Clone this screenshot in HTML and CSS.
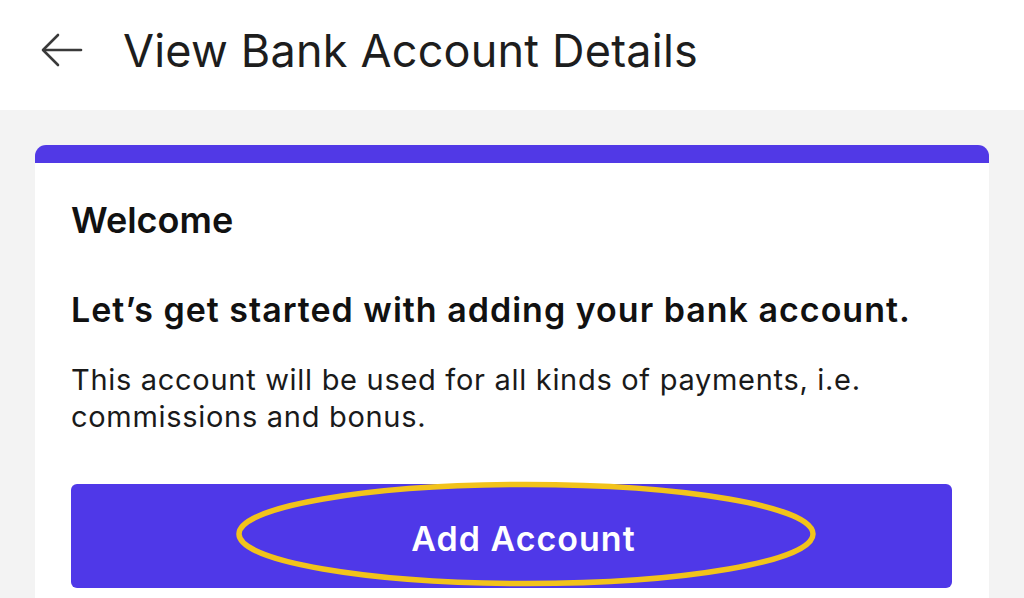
FILE: index.html
```html
<!DOCTYPE html>
<html lang="en">
<head>
<meta charset="utf-8">
<title>View Bank Account Details</title>
<link rel="stylesheet" href="styles.css">
</head>
<body>
<header class="topbar">
  <svg class="back" width="42" height="34" viewBox="0 0 42 34" fill="none" stroke="#3a3a3a" stroke-width="2.6" stroke-linecap="round" stroke-linejoin="round">
    <path d="M40 17 H3"/>
    <path d="M17 2 L2 17 L17 32"/>
  </svg>
  <h1 class="title">View Bank Account Details</h1>
</header>
<main class="content">
  <section class="card">
    <h2 class="welcome">Welcome</h2>
    <h3 class="lead">Let’s get started with adding your bank account.</h3>
    <p class="desc">This account will be used for all kinds of payments, i.e. commissions and bonus.</p>
    <div class="btn-wrap">
      <button class="btn">Add Account</button>
      <svg class="ring" width="584" height="106" viewBox="0 0 584 106" fill="none">
        <ellipse cx="292" cy="53" rx="287" ry="49.5" stroke="#f2c31b" stroke-width="5.5"/>
      </svg>
    </div>
  </section>
</main>
</body>
</html>
```

FILE: styles.css
```css
* { box-sizing: border-box; }
html, body { margin: 0; padding: 0; }
body {
  width: 1024px;
  height: 598px;
  overflow: hidden;
  background: #f3f3f3;
  font-family: Inter, "Noto Sans", sans-serif;
  color: #111;
}
.topbar {
  height: 110px;
  background: #fff;
  display: flex;
  align-items: center;
  padding: 0 0 10px 41px;
}
.back { display: block; flex: none; }
.title {
  margin: 0 0 0 40px;
  font-size: 45px;
  font-weight: 400;
  letter-spacing: 0.2px;
  color: #1d1d1d;
  line-height: 1;
}
.content {
  padding: 35px 35px 0 35px;
}
.card {
  background: #fff;
  border-top: 18px solid #5139e6;
  border-radius: 11px 11px 0 0;
  padding: 35px 37px 30px 36px;
  height: 460px;
}
.welcome {
  margin: 0;
  font-size: 36px;
  font-weight: 600;
  line-height: 44px;
  color: #111;
}
.lead {
  margin: 46px 0 0;
  font-size: 34px;
  font-weight: 600;
  letter-spacing: 1px;
  line-height: 44px;
  color: #111;
}
.desc {
  margin: 29px 0 0;
  font-size: 29px;
  font-weight: 400;
  letter-spacing: 0.7px;
  line-height: 37px;
  color: #1a1a1a;
}
.btn-wrap {
  position: relative;
  margin-top: 49px;
}
.btn {
  display: block;
  width: 100%;
  height: 104px;
  border: none;
  border-radius: 6px;
  background: #4f38e8;
  color: #fff;
  font-family: Inter, "Noto Sans", sans-serif;
  font-size: 34px;
  font-weight: 600;
  letter-spacing: 1px;
  padding: 5px 0 0 24px;
}
.ring {
  position: absolute;
  left: 163px;
  top: -3px;
  pointer-events: none;
}
```
